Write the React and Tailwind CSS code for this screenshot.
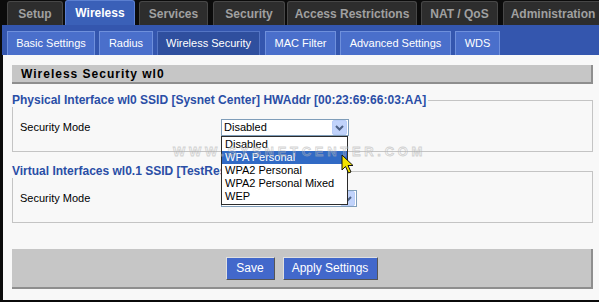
import React from 'react'

const topTabs = [
  { label: 'Setup', w: 'w-[56px]', ml: 'ml-0' },
  { label: 'Wireless', w: 'w-[70px]', ml: 'ml-[2px]', active: true },
  { label: 'Services', w: 'w-[69px]', ml: 'ml-[4px]' },
  { label: 'Security', w: 'w-[72px]', ml: 'ml-[5px]' },
  { label: 'Access Restrictions', w: 'w-[130px]', ml: 'ml-[2px]' },
  { label: 'NAT / QoS', w: 'w-[77px]', ml: 'ml-[4px]' },
  { label: 'Administration', w: 'w-[100px]', ml: 'ml-[5px]' }
]

const subTabs = [
  { label: 'Basic Settings', w: 'w-[88px]', ml: 'ml-0' },
  { label: 'Radius', w: 'w-[54px]', ml: 'ml-[4px]' },
  { label: 'Wireless Security', w: 'w-[103px]', ml: 'ml-[4px]', active: true },
  { label: 'MAC Filter', w: 'w-[71px]', ml: 'ml-[5px]' },
  { label: 'Advanced Settings', w: 'w-[111px]', ml: 'ml-[4px]' },
  { label: 'WDS', w: 'w-[45px]', ml: 'ml-[4px]' }
]

const modes = ['Disabled', 'WPA Personal', 'WPA2 Personal', 'WPA2 Personal Mixed', 'WEP']

function Chevron() {
  return (
    <svg width="9" height="6" viewBox="0 0 9 6">
      <path d="M1 1 L4.5 4.5 L8 1" fill="none" stroke="#4d6185" strokeWidth="2" />
    </svg>
  )
}

function FakeSelect({ width }) {
  return (
    <div className={`flex h-[17px] ${width} items-center justify-between border border-[#7f9db9] bg-white pl-[2px] pr-px text-[11px] text-black`}>
      <span>Disabled</span>
      <span className="flex h-[15px] w-[15px] items-center justify-center rounded-[2px] border border-[#b9cdf7] bg-[#c1d3fb]">
        <Chevron />
      </span>
    </div>
  )
}

function Group({ legend, mt, selectWidth }) {
  return (
    <div className={mt}>
      <div className="flex h-[13px]">
        <span className="whitespace-nowrap text-[12px] font-bold leading-[13px] text-[#2a4ea6]">
          {legend}
        </span>
        <div className="ml-[2px] h-[7px] flex-1 self-end border-r border-t border-[#c4c4c4]" />
      </div>
      <div className="flex h-[45px] items-center border-x border-b border-[#c4c4c4] pb-[3px] pl-[7px]">
        <span className="w-[201px] text-[11px] text-black">Security Mode</span>
        <FakeSelect width={selectWidth} />
      </div>
    </div>
  )
}

export default function App() {
  return (
    <div className="relative h-[302px] w-[599px] overflow-hidden bg-[#0b0b0b] font-['Liberation_Sans',Arial,sans-serif]">
      <div className="flex h-[25px] items-end pl-[7px]">
        {topTabs.map((t) => (
          <div
            key={t.label}
            className={`${t.w} ${t.ml} flex shrink-0 items-center justify-center rounded-t-[3px] border border-b-0 text-[12px] font-bold ${
              t.active
                ? 'h-[25px] border-[#5b7fd0] bg-[#3a60b8] text-white'
                : 'h-[24px] border-[#474747] bg-[#2d2d2d] text-[#a0a0a0]'
            }`}
          >
            {t.label}
          </div>
        ))}
      </div>

      <div className="ml-[2px] flex h-[30px] items-end bg-[#3456ae] pl-[5px]">
        {subTabs.map((t) => (
          <div
            key={t.label}
            className={`${t.w} ${t.ml} flex h-[24px] shrink-0 items-center justify-center border border-b-0 text-[11px] text-white ${
              t.active ? 'border-[#5475c4] bg-[#2f4f9e]' : 'border-[#6f90dc] bg-[#4a6fcb]'
            }`}
          >
            {t.label}
          </div>
        ))}
      </div>

      <div className="ml-[3px] h-[245px] bg-[#f8f8f8] pl-[9px] pr-[6px] pt-[10px]">
        <div className="flex h-[19px] items-center border-b-2 border-r-2 border-[#8e8e8e] bg-[#c6c6c6] pl-[9px] text-[12px] font-bold tracking-[1px] text-black">
          Wireless Security wl0
        </div>

        <Group
          legend="Physical Interface wl0 SSID [Sysnet Center] HWAddr [00:23:69:66:03:AA]"
          mt="mt-[10px]"
          selectWidth="w-[128px]"
        />
        <Group
          legend="Virtual Interfaces wl0.1 SSID [TestRest]"
          mt="mt-[13px]"
          selectWidth="w-[136px]"
        />

        <div className="mt-[26px] flex h-[40px] items-center justify-center gap-[8px] border-b-2 border-r-2 border-[#8e8e8e] bg-[#c6c6c6]">
          <button className="h-[23px] w-[49px] border border-b-[#555] border-l-[#e0e0e0] border-r-[#555] border-t-[#e0e0e0] bg-[#4268cb] text-[12px] text-white">
            Save
          </button>
          <button className="h-[23px] w-[95px] border border-b-[#555] border-l-[#e0e0e0] border-r-[#555] border-t-[#e0e0e0] bg-[#4268cb] text-[12px] text-white">
            Apply Settings
          </button>
        </div>
      </div>

      {/* open dropdown list */}
      <div className="absolute left-[221px] top-[136px] w-[127px] border border-[#2b2b2b] bg-white py-px">
        {modes.map((m, i) => (
          <div
            key={m}
            className={`h-[13px] pl-[3px] text-[11px] leading-[13px] ${
              i === 1 ? 'bg-[#316ac5] text-white' : 'text-black'
            }`}
          >
            {m}
          </div>
        ))}
      </div>

      {/* watermark */}
      <div className="pointer-events-none absolute left-[173px] top-[145px] whitespace-nowrap text-[13px] font-bold leading-[14px] tracking-[3.7px] text-[rgba(230,230,230,0.15)] [-webkit-text-stroke:0.8px_rgba(175,175,175,0.55)]">
        WWW.SYSNETCENTER.COM
      </div>

      {/* mouse pointer */}
      <svg className="absolute left-[341px] top-[154px]" width="13" height="20" viewBox="0 0 13 20">
        <path d="M1 1 L1 16 L4.5 12.5 L7.5 19 L10 18 L7 11.5 L12 11.5 Z" fill="#f2e200" stroke="#111" strokeWidth="1" strokeLinejoin="round" />
      </svg>
    </div>
  )
}
